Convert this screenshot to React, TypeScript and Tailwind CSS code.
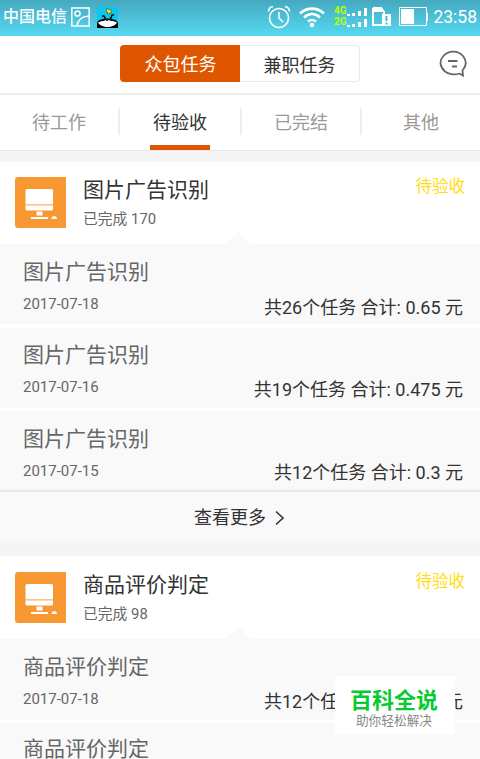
import React from "react";

type Row = { date: string; total: string; box: string; totalTop: string };

const TABS = [
  { name: "待工作", width: "w-[120px]" },
  { name: "待验收", width: "w-[122px]" },
  { name: "已完结", width: "w-[120px]" },
  { name: "其他", width: "w-[118px]" },
];

const FIRST_ROWS: Row[] = [
  { date: "2017-07-18", total: "共26个任务 合计: 0.65 元", box: "h-20 mb-px pt-4", totalTop: "mt-9" },
  { date: "2017-07-16", total: "共19个任务 合计: 0.475 元", box: "h-20 pt-[15px]", totalTop: "mt-[35px]" },
  { date: "2017-07-15", total: "共12个任务 合计: 0.3 元", box: "h-[79px] pt-4", totalTop: "mt-[34px]" },
];

const SECOND_ROWS: Row[] = [
  { date: "2017-07-18", total: "共12个任务 合计: 0.36 元", box: "h-[81px] pt-4", totalTop: "mt-[35px]" },
  { date: "2017-07-16", total: "", box: "h-20 pt-3.5", totalTop: "mt-9" },
];

function StatusBar() {
  return (
    <div className="flex h-9 shrink-0 items-center bg-linear-to-b from-[#45a9bf] to-[#55daf3] pl-[3px] text-white">
      <span className="-mt-0.5 w-[68px] text-[16px] leading-9 font-medium whitespace-nowrap">中国电信</span>
      <svg className="-mt-0.5" width="19" height="20" viewBox="0 0 19 20" fill="none" stroke="#fff" strokeWidth="1.500">
        <rect x="0.8" y="1" width="17.400" height="18" />
        <circle cx="6.500" cy="6.500" r="2.600" />
        <path d="M6 19C6.500 13 11 9.500 18 9" />
      </svg>
      <svg className="ml-[7px] -mt-0.5" width="21" height="21" viewBox="0 0 21 21">
        <rect width="21" height="21" rx="2" fill="#08c8ee" />
        <path d="M9.500 1.500h1.500v1h3v3.500h-1.500v1h-2V5h-1z" fill="#f5e616" stroke="#333" strokeWidth="0.500" />
        <path d="M5 9h2l1.500 3M17 8h-2l-1.500 4" stroke="#050505" strokeWidth="1.500" fill="none" />
        <path d="M0 16c1-3 5-4.500 10.500-4.500S20 13 21 16v5H0z" fill="#050505" />
        <path d="M1 15.500l4-1.500h2l1.500-1 1.500 1 2-1 2 1h2l4 1.500c-1 2-4 4.500-9.500 4.500S2 17.500 1 15.500z" fill="#fff" />
      </svg>
      <svg className="-mt-px mr-1 ml-auto" width="163" height="30" viewBox="0 0 163 30" fill="none">
        <g stroke="#fff" strokeWidth="1.600">
          <circle cx="13" cy="15" r="9.500" />
          <path d="M13 9v6l4 4M2.500 8.500c0-3 2-4.500 4.500-5M23.500 8.500c0-3-2-4.500-4.500-5" />
        </g>
        <g stroke="#fff" strokeWidth="2.600">
          <path d="M34 10.500c7-6.500 17-6.500 24 0M38 14.500c5-4.500 11-4.500 16 0M42 18.300c3-2 5-2 8 0" />
          <circle cx="46" cy="22" r="1.200" fill="#fff" strokeWidth="2" />
        </g>
        <g fill="#b4ff00" fontFamily="Roboto, sans-serif" fontSize="10" fontWeight="700">
          <text x="68" y="11">4G</text>
          <text x="68" y="22">2G</text>
        </g>
        <path
          fill="#fff"
          d="M81 11h3v2h-3zM86 10h3v3h-3zM92 8h3v5h-3zM98 5h3v8h-3zM81 22h3v2h-3zM86 21h3v3h-3zM92 19h3v5h-3zM98 16h3v8h-3z"
        />
        <path d="M107 5h8l3 4v2M116 22h-9V5" stroke="#fff" strokeWidth="2" />
        <path d="M107 4h8l4 5h-12zM116 11h9v12h-9z" fill="#fff" />
        <path d="M120.500 13v5M120.500 19.500v2" stroke="#49b9cf" strokeWidth="2" />
        <path d="M133.500 4.500h27v18h-27z" stroke="#fff" />
        <path d="M135 6h13v15h-13zM161 10h1v8h-1z" fill="#fff" />
      </svg>
      <span className="mr-[3px] -mt-0.5 font-[Roboto,sans-serif] text-[17.500px] leading-9">23:58</span>
    </div>
  );
}

function TaskIcon() {
  return (
    <svg className="shrink-0" width="51" height="51" viewBox="0 0 51 51">
      <path d="M3 0h48v51H3q-3 0-3-3V3q0-3 3-3z" fill="#f79833" />
      <path d="M12 12H36.500q1.500 0 1.500 1.500V27H10.500V13.500Q10.500 12 12 12z" fill="#fff" />
      <path d="M10.500 27H38v1.500H10.500z" fill="#fbc48a" />
      <path d="M10.500 28.500H38V32q0 1.500-1.500 1.500H12Q10.500 33.500 10.500 32z" fill="#fff" />
      <path d="M21.500 34.500h6v4h-6zM16 40h17v2H16zM36.500 42c0-4 5.500-4 5.500 0z" fill="#fff" />
    </svg>
  );
}

function TaskCard({ title, done, rows, head }: { title: string; done: number; rows: Row[]; head: string }) {
  return (
    <section className="bg-white">
      <div className={"relative flex pl-[15px] pr-[15px] " + head}>
        <TaskIcon />
        <div className="ml-[17px] flex flex-col">
          <h2 className="text-[21px] leading-[26px] text-[#333]">{title}</h2>
          <p className="mt-1.5 text-[14.800px] leading-5 text-[#666]">已完成 {done}</p>
        </div>
        <span className="ml-auto text-[16.500px] leading-5 text-[#ffdc14]">待验收</span>
        <svg className="absolute bottom-0 left-[226px]" width="25" height="12" viewBox="0 0 25 12">
          <path d="M0 12L12.500 0L25 12z" fill="#f9f9f9" />
        </svg>
      </div>
      <div className="flex flex-col gap-[3px]">
        {rows.map((row) => (
          <div key={row.date} className={"flex justify-between bg-[#f9f9f9] pl-[23px] pr-[17px] " + row.box}>
            <div>
              <h3 className="text-[21px] leading-6 text-[#666]">{title}</h3>
              <p className="mt-[10px] text-[15px] leading-5 text-[#666]">{row.date}</p>
            </div>
            <span className={"text-[18px] leading-6 text-[#333] " + row.totalTop}>{row.total}</span>
          </div>
        ))}
      </div>
    </section>
  );
}

export default function App() {
  return (
    <div className="relative flex h-[759px] w-[480px] flex-col overflow-hidden bg-[#f5f5f5] font-[Roboto,'Noto_Sans_CJK_SC',sans-serif]">
      <StatusBar />
      <header className="flex h-[59px] shrink-0 items-start border-b-2 border-[#eee] bg-white pt-[9px]">
        <div className="ml-[120px] flex h-[37px] w-60 rounded text-[18px]">
          <div className="w-[120px] rounded-l bg-[#df5600] pl-px text-center leading-[40px] text-white">众包任务</div>
          <div className="w-[120px] rounded-r border border-l-0 border-[#e8e8e8] text-center leading-[39px] text-[#333]">兼职任务</div>
        </div>
        <svg className="mt-[5px] ml-[79px]" width="29" height="28" viewBox="0 0 29 28" fill="none" stroke="#666" strokeWidth="1.800">
          <path d="M20.500 23.500C15 25.500 9 24 6 21.500C1 17 0 11 4 6.500C9 0 19 0 24 6C28 11 27 16.500 23.500 20.500L24 25.500L20.500 23.500" />
          <path d="M9 11h9.500M13 16.500h5" />
        </svg>
      </header>
      <nav className="flex h-[56px] shrink-0 items-start border-b border-[#e8e8e8] bg-white text-[18px]">
        {TABS.map((tab, i) => (
          <div key={tab.name} className={"flex h-full flex-col items-center " + tab.width}>
            <div
              className={
                "mt-[13px] h-[27px] w-full text-center leading-[30px] " +
                (i < 3 ? "border-r-2 border-[#eee] " : "") +
                (i === 1 ? "text-[#333]" : "text-[#999]")
              }
            >
              {tab.name}
            </div>
            {i === 1 && <div className="mt-auto mr-0.5 h-[5px] w-[60px] bg-[#df5600]" />}
          </div>
        ))}
      </nav>
      <main className="mt-[11px]">
        <TaskCard title="图片广告识别" done={170} rows={FIRST_ROWS} head="h-[82px] pt-[15px]" />
        <button className="flex h-[53px] w-full items-center justify-center border-t-2 border-[#e8e8e8] bg-[#f9f9f9] pr-px text-[18px] text-[#333]">
          查看更多
          <svg className="ml-[9px]" width="10" height="16" viewBox="0 0 10 16" fill="none" stroke="#333" strokeWidth="1.600">
            <path d="M1 1.500L8 8L1 14.500" />
          </svg>
        </button>
        <div className="h-[13px]" />
        <TaskCard title="商品评价判定" done={98} rows={SECOND_ROWS} head="h-[83px] pt-4" />
      </main>
      <div className="absolute top-[676px] left-[335px] flex h-[58px] w-[120px] flex-col items-center bg-white pt-3 pr-0.5">
        <strong className="text-[22px] leading-[25px] font-bold text-[#06cb32]">百科全说</strong>
        <span className="text-[12.700px] leading-4 text-[#888]">助你轻松解决</span>
      </div>
    </div>
  );
}
